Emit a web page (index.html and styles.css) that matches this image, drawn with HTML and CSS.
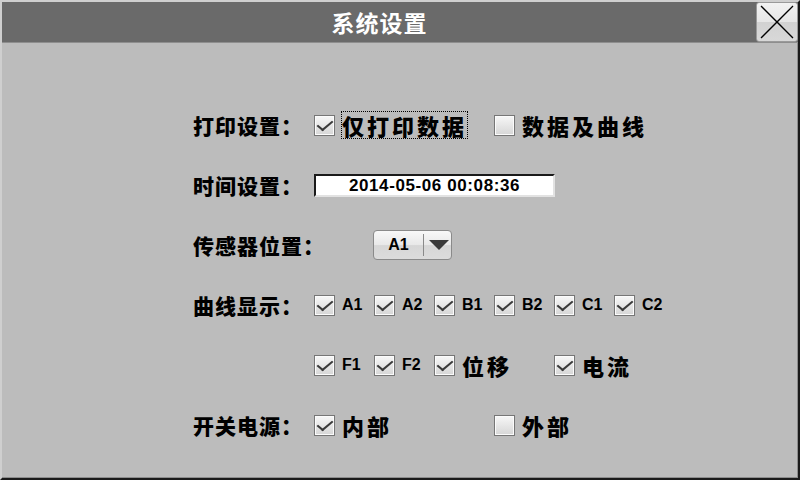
FILE: index.html
```html
<!DOCTYPE html>
<html lang="zh-CN">
<head>
  <meta charset="UTF-8">
  <title>系统设置</title>
  <link rel="stylesheet" href="styles.css">
</head>
<body>
  <div class="window">
    <div class="title-bar">
      <h1 class="title">系统设置</h1>
      <button class="close-btn" aria-label="关闭">
        <svg width="40" height="38" viewBox="0 0 40 38">
          <line x1="4" y1="3" x2="36" y2="35" stroke="#000" stroke-width="1.3"/>
          <line x1="36" y1="3" x2="4" y2="35" stroke="#000" stroke-width="1.3"/>
        </svg>
      </button>
    </div>

    <div class="settings">
      <!-- 打印设置 -->
      <div class="row">
        <div class="label">打印设置：</div>
        <div class="options">
          <label class="opt w180"><span class="box checked"></span><span class="opt-text cn focus">仅打印数据</span></label>
          <label class="opt"><span class="box"></span><span class="opt-text cn">数据及曲线</span></label>
        </div>
      </div>

      <!-- 时间设置 -->
      <div class="row">
        <div class="label">时间设置：</div>
        <div class="options">
          <div class="time-field">2014-05-06 00:08:36</div>
        </div>
      </div>

      <!-- 传感器位置 -->
      <div class="row">
        <div class="label">传感器位置：</div>
        <div class="options">
          <div class="select">
            <span class="select-value">A1</span>
            <span class="select-arrow"></span>
          </div>
        </div>
      </div>

      <!-- 曲线显示 -->
      <div class="row">
        <div class="label">曲线显示：</div>
        <div class="options">
          <label class="opt"><span class="box checked"></span><span class="opt-text en">A1</span></label>
          <label class="opt"><span class="box checked"></span><span class="opt-text en">A2</span></label>
          <label class="opt"><span class="box checked"></span><span class="opt-text en">B1</span></label>
          <label class="opt"><span class="box checked"></span><span class="opt-text en">B2</span></label>
          <label class="opt"><span class="box checked"></span><span class="opt-text en">C1</span></label>
          <label class="opt"><span class="box checked"></span><span class="opt-text en">C2</span></label>
        </div>
      </div>

      <div class="row">
        <div class="label"></div>
        <div class="options">
          <label class="opt"><span class="box checked"></span><span class="opt-text en">F1</span></label>
          <label class="opt"><span class="box checked"></span><span class="opt-text en">F2</span></label>
          <label class="opt w120"><span class="box checked"></span><span class="opt-text cn">位移</span></label>
          <label class="opt"><span class="box checked"></span><span class="opt-text cn">电流</span></label>
        </div>
      </div>

      <!-- 开关电源 -->
      <div class="row">
        <div class="label">开关电源：</div>
        <div class="options">
          <label class="opt w180"><span class="box checked"></span><span class="opt-text cn">内部</span></label>
          <label class="opt"><span class="box"></span><span class="opt-text cn">外部</span></label>
        </div>
      </div>
    </div>
  </div>
</body>
</html>
```

FILE: styles.css
```css
body {
  margin: 0;
  font-family: "Noto Sans CJK SC", "Liberation Sans", sans-serif;
  background: #bcbcbc;
}
.window {
  width: 800px;
  height: 480px;
  box-sizing: border-box;
  background: #bcbcbc;
  border-top: 2px solid #cfcfcf;
  border-left: 2px solid #cfcfcf;
  border-right: 2px solid #1a1a1a;
  border-bottom: 2px solid #1a1a1a;
  box-shadow: inset -1px -1px 0 #8c8c8c;
}
.title-bar {
  display: grid;
  grid-template-columns: 1fr 42px;
  height: 40px;
  background: #6a6a6a;
  border-bottom: 1px solid #8e8e8e;
}
.title {
  margin: 0;
  color: #fff;
  font-size: 23px;
  font-weight: bold;
  letter-spacing: 1px;
  text-align: center;
  line-height: 40px;
  padding-left: 1px;
}
.close-btn {
  width: 42px;
  height: 40px;
  padding: 0;
  border: 1px solid #9a9a9a;
  border-radius: 3px;
  background: linear-gradient(#f2f2f2, #e6e6e6 50%, #d2d2d2 51%, #d8d8d8);
  display: flex;
  align-items: center;
  justify-content: center;
}
.settings {
  padding: 52px 0 0 191px;
}
.row {
  display: flex;
  align-items: center;
  height: 60px;
}
.label {
  width: 121px;
  flex: none;
  font-size: 21px;
  font-weight: 900;
  color: #000;
  white-space: nowrap;
  letter-spacing: 1px;
}
.options {
  display: flex;
  align-items: center;
}
.opt {
  display: flex;
  align-items: center;
  width: 60px;
}
.opt.w120 {
  width: 120px;
}
.opt.w180 {
  width: 180px;
}
.box {
  width: 19px;
  height: 19px;
  flex: none;
  border: 1px solid #767676;
  box-shadow: inset 0 0 0 1px #fbfbfb;
  background: linear-gradient(#f7f7f7, #d6d6d6);
  position: relative;
}
.box.checked::after {
  content: "";
  position: absolute;
  left: 6px;
  top: 1px;
  width: 6px;
  height: 12px;
  border-right: 2px solid #3a3a3a;
  border-bottom: 2px solid #3a3a3a;
  transform: rotate(40deg) skewX(-10deg);
}
.opt-text {
  margin-left: 7px;
  color: #000;
  font-weight: 900;
  white-space: nowrap;
}
.opt-text.en {
  font-family: "Liberation Sans", sans-serif;
  font-weight: bold;
  font-size: 16px;
}
.opt-text.cn {
  font-size: 22px;
  letter-spacing: 3px;
  line-height: 26px;
}
.focus {
  outline: 1px dotted #000;
  outline-offset: 0;
}
.time-field {
  width: 237px;
  height: 19px;
  background: #fff;
  border-top: 2px solid #1a1a1a;
  border-left: 2px solid #1a1a1a;
  border-right: 2px solid #e2e2e2;
  border-bottom: 2px solid #e2e2e2;
  font-family: "Liberation Sans", sans-serif;
  font-size: 17px;
  font-weight: bold;
  letter-spacing: 0.6px;
  line-height: 19px;
  text-align: center;
}
.select {
  margin-left: 59px;
  width: 77px;
  height: 28px;
  display: flex;
  align-items: center;
  border: 1px solid #8a8a8a;
  border-radius: 4px;
  background: linear-gradient(#f8f8f8, #e8e8e8 50%, #d6d6d6 52%, #dcdcdc);
}
.select-value {
  width: 49px;
  text-align: center;
  font-family: "Liberation Sans", sans-serif;
  font-size: 16px;
  font-weight: bold;
  border-right: 1px solid #8a8a8a;
  line-height: 22px;
}
.select-arrow {
  margin-left: 5px;
  width: 0;
  height: 0;
  border-left: 10px solid transparent;
  border-right: 10px solid transparent;
  border-top: 10px solid #3a3a3a;
}
```
